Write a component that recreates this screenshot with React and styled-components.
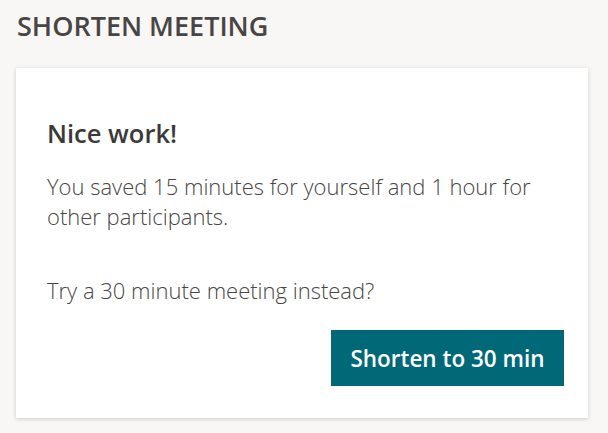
import React from 'react';
import styled, { createGlobalStyle } from 'styled-components';

const GlobalStyle = createGlobalStyle`
  html, body {
    margin: 0;
    padding: 0;
    background: #f8f7f6;
    font-family: "Open Sans", "Noto Sans", sans-serif;
  }
`;

const Page = styled.div`
  width: 608px;
  height: 433px;
  padding: 8px 20px 0 16px;
  box-sizing: border-box;
  display: flex;
  flex-direction: column;
`;

const Heading = styled.div`
  font-size: 27px;
  font-weight: 600;
  color: #484644;
  line-height: 36px;
  padding-left: 1px;
  margin-bottom: 24px;
`;

const Card = styled.div`
  background: #ffffff;
  box-shadow: 0 1px 4px rgba(0, 0, 0, 0.18);
  padding: 50px 24px 32px 31px;
  display: flex;
  flex-direction: column;
`;

const Title = styled.div`
  font-size: 25.5px;
  font-weight: 600;
  color: #3b3a39;
  line-height: 30px;
  margin-bottom: 23px;
`;

const Text = styled.p`
  margin: 0 0 ${(p) => p.gap || 0}px 0;
  font-size: 22px;
  font-weight: 300;
  color: #484644;
  line-height: 30px;
`;

const Actions = styled.div`
  display: flex;
  justify-content: flex-end;
`;

const Button = styled.button`
  background: #006876;
  color: #ffffff;
  border: 0;
  height: 56px;
  width: 233px;
  padding: 0;
  font-family: inherit;
  font-size: 22.5px;
  font-weight: 600;
  cursor: pointer;
`;

export default function App() {
  return (
    <>
      <GlobalStyle />
      <Page>
        <Heading>SHORTEN MEETING</Heading>
        <Card>
          <Title>Nice work!</Title>
          <Text gap={44}>
            You saved 15 minutes for yourself and 1 hour for other participants.
          </Text>
          <Text gap={25}>Try a 30 minute meeting instead?</Text>
          <Actions>
            <Button>Shorten to 30 min</Button>
          </Actions>
        </Card>
      </Page>
    </>
  );
}
